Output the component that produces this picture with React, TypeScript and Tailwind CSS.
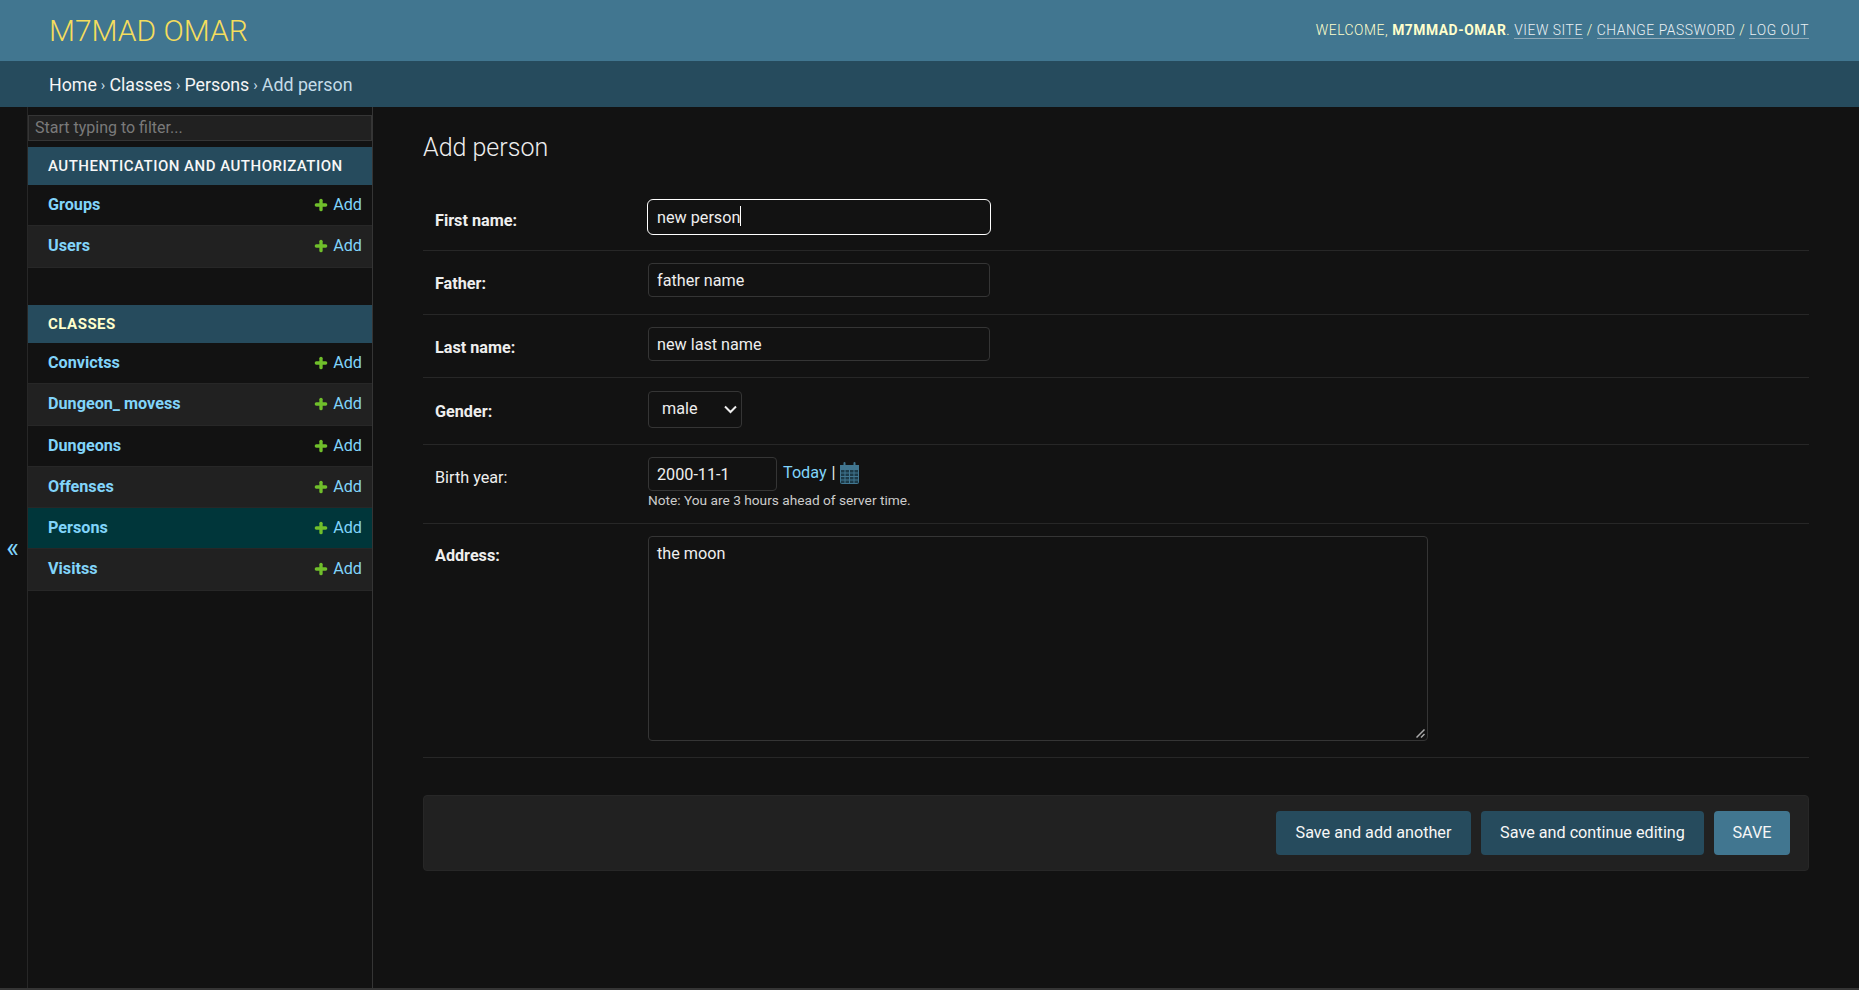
import React from "react";
import { Plus } from "lucide-react";

const Field = ({ label, bold = true, rowClass, labelClass = "pt-[11px]", children }: { label: string; bold?: boolean; rowClass: string; labelClass?: string; children: React.ReactNode }) => {
  return (
    <div className={`flex border-b border-[#272727] pl-3 ${rowClass}`}>
      <label className={`w-[213px] shrink-0 text-[16.2px] leading-[20px] text-[#eeeeee] ${labelClass} ${bold ? "font-bold" : "font-normal"}`}>
        {label}
      </label>
      <div>{children}</div>
    </div>
  );
};

const TextBox = ({ value, focused }: { value: string; focused?: boolean }) => {
  return (
    <div className="relative">
      <input
        readOnly
        defaultValue={value}
        className={`block rounded-[4px] border bg-[#121212] px-2 text-[16.2px] text-[#eeeeee] outline-none ${
          focused ? "-ml-px h-[36px] w-[344px] rounded-[6px] border-white pl-[9px]" : "h-[34px] w-[342px] border-[#353535]"
        }`}
      />
      {focused && <span className="absolute left-[92px] top-[7px] h-[20px] w-px bg-white" />}
    </div>
  );
};

const ModelRow = ({ name, alt, active, tall }: { name: string; alt?: boolean; active?: boolean; tall?: boolean }) => {
  return (
    <div
      className={`flex items-center justify-between border-b border-[#272727] pl-5 pr-[10px] text-[16.2px] ${tall ? "h-[42px]" : "h-[41px]"} ${
        active ? "bg-[#00363a]" : alt ? "bg-[#212121]" : "bg-[#121212]"
      }`}
    >
      <a className="font-bold text-[#81d4fa]">{name}</a>
      <a className="flex items-center gap-[4px] text-[#81d4fa]">
        <Plus size={16} strokeWidth={5} className="text-[#70bf2b]" />
        Add
      </a>
    </div>
  );
};

const Caption = ({ title, yellow }: { title: string; yellow?: boolean }) => {
  return (
    <div className={`flex h-[38px] items-center bg-[#264b5d] pl-5 text-[15px] tracking-[0.5px] ${yellow ? "font-bold text-[#ffffcc]" : "font-medium text-[#f7f7f7]"}`}>
      {title}
    </div>
  );
};

const HeaderLink = ({ children }: { children: React.ReactNode }) => {
  return <a className="border-b border-[#8fa9b8] text-[#eaf0f3]">{children}</a>;
};

const CalendarIcon = () => {
  return (
    <svg width="19" height="22" viewBox="0 0 19 22" className="ml-1" fill="none" stroke="#417690">
      <rect x="0.5" y="3.5" width="18" height="18" rx="1" fill="#1c3a48" />
      <rect x="0.5" y="3.5" width="18" height="4" fill="#417690" />
      <path d="M1 11h17M1 14.5h17M1 18h17M5 8v13M9.500 8v13M14 8v13" strokeWidth="1" />
      <path d="M4.500 1v4M14.500 1v4" strokeWidth="2" strokeLinecap="round" />
    </svg>
  );
};

export default function App() {
  return (
    <div className="flex h-[990px] flex-col overflow-hidden bg-[#121212] font-['Roboto',sans-serif]">
      <header className="flex h-[61px] shrink-0 items-center justify-between bg-[#417690] pl-[49px] pr-[50px]">
        <h1 className="text-[30px] font-light uppercase text-[#f5dd5d]">M7mad Omar</h1>
        <div className="text-[13.85px] uppercase tracking-[0.55px] text-[#ffffcc] font-light">
          Welcome, <strong className="font-bold">m7mmad-omar</strong>. <HeaderLink>View site</HeaderLink> / <HeaderLink>Change password</HeaderLink> / <HeaderLink>Log out</HeaderLink>
        </div>
      </header>

      <div className="flex h-[46px] shrink-0 items-center bg-[#264b5d] pl-[49px] pt-[2px] text-[17.8px] text-[#c4dce8]">
        <a className="text-[#f5f5f5]">Home</a>
        <span className="px-[4px] text-[15px]">›</span>
        <a className="text-[#f5f5f5]">Classes</a>
        <span className="px-[4px] text-[15px]">›</span>
        <a className="text-[#f5f5f5]">Persons</a>
        <span className="px-[4px] text-[15px]">›</span>
        <span>Add person</span>
      </div>

      <div className="flex min-h-0 flex-1 border-b-2 border-[#353535]">
        <button className="flex w-[28px] shrink-0 items-center justify-center border-r border-[#272727] pr-[2px] pt-[2px] text-[27px] leading-none text-[#81d4fa]">
          «
        </button>

        <nav className="w-[345px] shrink-0 border-r border-[#353535] pt-2">
          <input
            placeholder="Start typing to filter..."
            className="mb-[6px] block h-[26px] w-full border border-[#353535] bg-[#212121] px-[6px] pb-[2px] text-[16px] text-[#eeeeee] outline-none placeholder:text-[#7a7a7a]"
          />
          <Caption title="AUTHENTICATION AND AUTHORIZATION" />
          <ModelRow name="Groups" />
          <ModelRow name="Users" alt tall />
          <div className="mt-[37px]">
            <Caption title="CLASSES" yellow />
            <ModelRow name="Convictss" />
            <ModelRow name="Dungeon_ movess" alt tall />
            <ModelRow name="Dungeons" />
            <ModelRow name="Offenses" alt />
            <ModelRow name="Persons" active />
            <ModelRow name="Visitss" alt tall />
          </div>
        </nav>

        <main className="min-w-0 flex-1 pl-[50px] pr-[50px] pt-6">
          <h1 className="mb-[2px] text-[25px] font-light leading-[34px] text-[#eeeeee]">Add person</h1>

          <Field label="First name:" labelClass="pt-[12px]" rowClass="h-[84px] pt-[32px]">
            <TextBox value="new person" focused />
          </Field>
          <Field label="Father:" rowClass="h-[64px] pt-3">
            <TextBox value="father name" />
          </Field>
          <Field label="Last name:" rowClass="h-[63px] pt-3">
            <TextBox value="new last name" />
          </Field>
          <Field label="Gender:" rowClass="h-[67px] pt-[13px]">
            <div className="relative w-[94px]">
              <select
                defaultValue="male"
                className="block h-[37px] w-full appearance-none rounded-[4px] border border-[#353535] bg-[#121212] pl-[13px] text-[16.2px] text-[#eeeeee] outline-none"
              >
                <option>male</option>
                <option>female</option>
              </select>
              <svg width="13" height="9" viewBox="0 0 13 9" fill="none" stroke="#eeeeee" strokeWidth="2" className="pointer-events-none absolute right-[5px] top-[14px]">
                <path d="M1 1.500 6.500 7 12 1.500" />
              </svg>
            </div>
          </Field>
          <Field label="Birth year:" bold={false} rowClass="h-[79px] pt-3">
            <div className="flex items-start">
              <input
                readOnly
                defaultValue="2000-11-1"
                className="block h-[34px] w-[129px] rounded-[4px] border border-[#353535] bg-[#121212] px-2 text-[16.2px] text-[#eeeeee] outline-none"
              />
              <div className="ml-[6px] flex items-center pt-[5px] text-[16.2px] leading-[20px]">
                <a className="text-[#81d4fa]">Today</a>
                <span className="ml-[5px] text-[#eeeeee]">|</span>
                <CalendarIcon />
              </div>
            </div>
            <p className="mt-[1px] text-[13.7px] leading-[16px] text-[#cccccc]">Note: You are 3 hours ahead of server time.</p>
          </Field>
          <Field label="Address:" labelClass="pt-[10px]" rowClass="h-[234px] pt-3">
            <div className="relative">
              <textarea
                readOnly
                defaultValue="the moon"
                className="block h-[205px] w-[780px] resize-none rounded-[4px] border border-[#353535] bg-[#121212] px-2 py-[7px] text-[16.2px] leading-[20px] text-[#eeeeee] outline-none"
              />
              <svg width="9" height="9" viewBox="0 0 9 9" stroke="#aaaaaa" strokeWidth="1.500" className="pointer-events-none absolute bottom-[3px] right-[3px]">
                <path d="M0.500 8.500 8.500 0.500M5 8.500 8.500 5" />
              </svg>
            </div>
          </Field>

          <div className="mt-[37px] flex h-[76px] items-center justify-end gap-[10px] rounded-[4px] border border-[#272727] bg-[#212121] pr-[18px]">
            <button className="h-[44px] w-[195px] rounded-[4px] bg-[#264b5d] text-[16.2px] text-[#f7f7f7]">Save and add another</button>
            <button className="h-[44px] w-[223px] rounded-[4px] bg-[#264b5d] text-[16.2px] text-[#f7f7f7]">Save and continue editing</button>
            <button className="h-[44px] w-[76px] rounded-[4px] bg-[#417690] text-[16.2px] text-[#f7f7f7]">SAVE</button>
          </div>
        </main>
      </div>
    </div>
  );
}
